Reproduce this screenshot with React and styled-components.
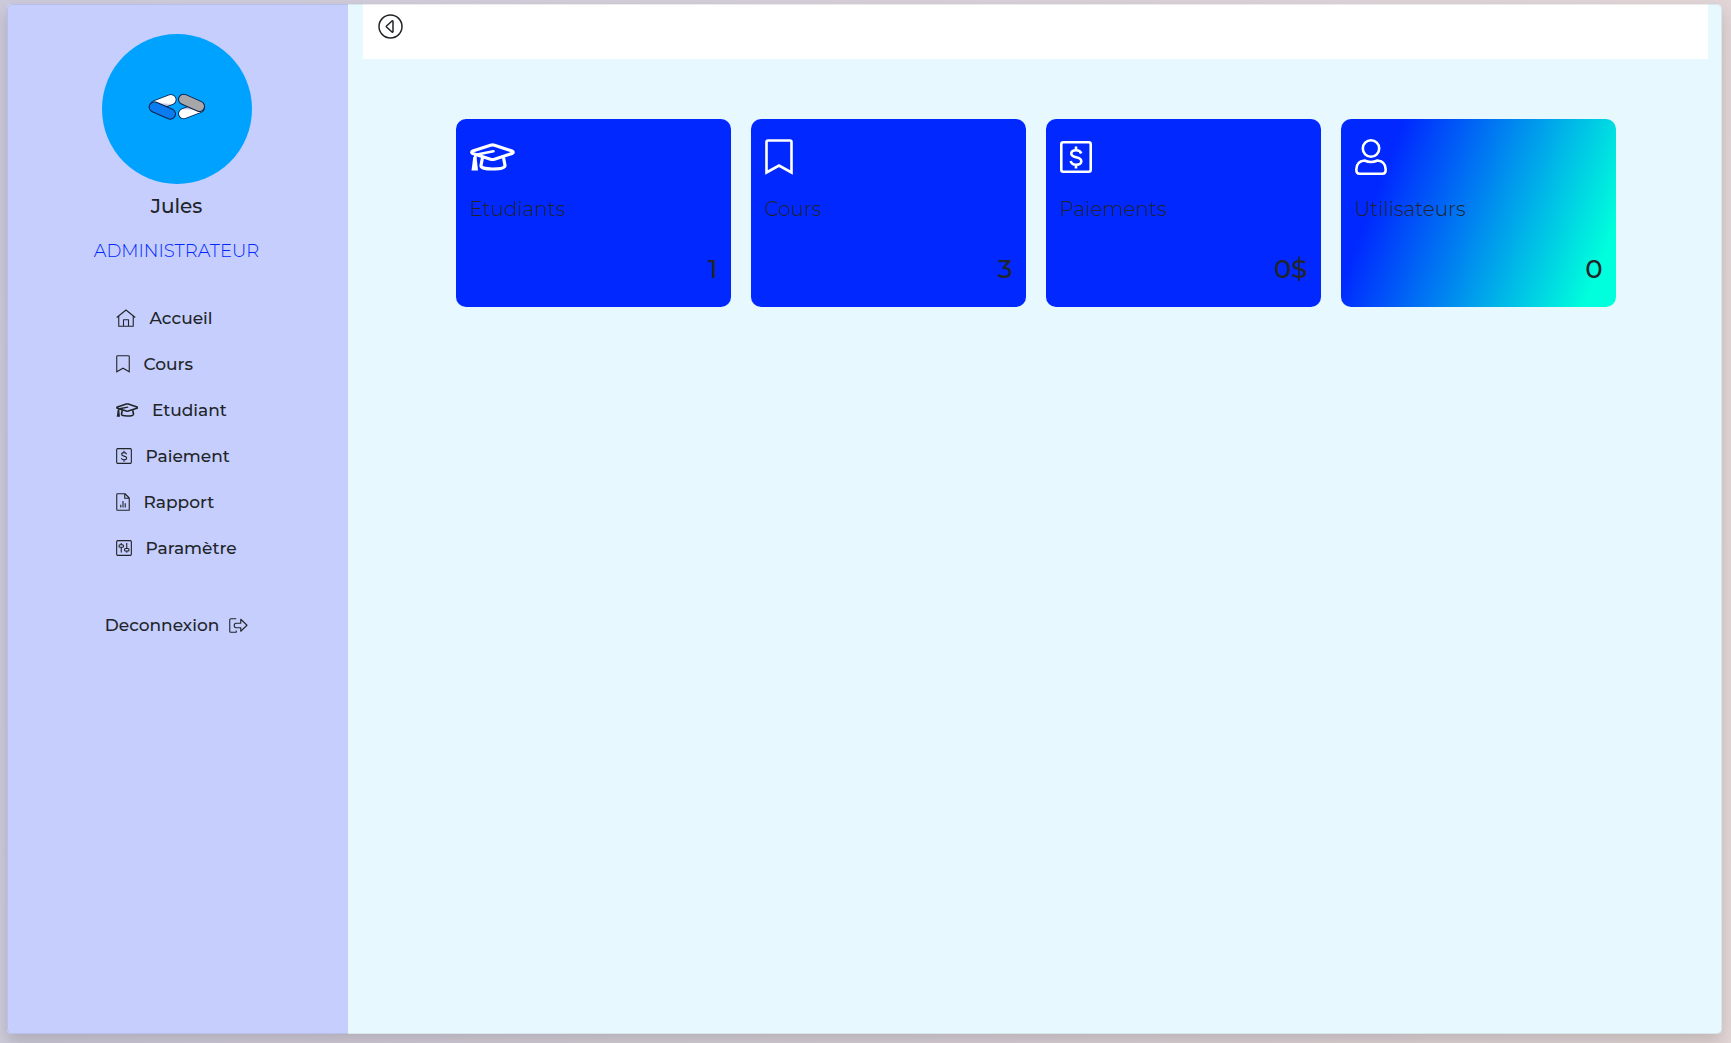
import React from "react";
import styled, { createGlobalStyle } from "styled-components";

const GlobalStyle = createGlobalStyle`
  *, *::before, *::after { box-sizing: border-box; }
  body {
    margin: 0;
    color: #212529;
    font-family: Montserrat, Inter, "Noto Sans", sans-serif;
  }
`;

const Page = styled.div`
  display: flex;
  min-height: 100vh;
  padding: 4px 9px 9px 7px;
  background: linear-gradient(100deg, #cbc9da 0%, #e3d6d6 100%);
`;

const Shell = styled.div`
  position: relative;
  display: flex;
  flex: 1;
  overflow: hidden;
  border-radius: 5px;
  background: #e7f9fe;
  box-shadow: 0 8px 16px rgba(0, 0, 0, 0.15);

  &::after {
    content: "";
    position: absolute;
    inset: 0;
    border: 1px solid rgba(0, 0, 0, 0.07);
    border-radius: inherit;
    pointer-events: none;
  }
`;

const Sidebar = styled.aside`
  display: flex;
  flex: 0 0 341px;
  flex-direction: column;
  align-items: center;
  padding: 30px 2px 0 0;
  background: #c6cefd;
`;

const Avatar = styled.div`
  display: flex;
  align-items: center;
  justify-content: center;
  width: 150px;
  height: 150px;
  padding-bottom: 4px;
  border-radius: 50%;
  background: #00a2ff;
`;

const UserName = styled.h1`
  margin: 10px 0 0;
  font-size: 20px;
  font-weight: 500;
  line-height: 24px;
`;

const Role = styled.p`
  margin: 21px 0 0;
  color: #0028ff;
  font-size: 18px;
  font-weight: 300;
  line-height: 24px;
`;

const Nav = styled.nav`
  display: flex;
  flex-direction: column;
  width: 122px;
  margin-top: 32px;
`;

const NavLink = styled.a`
  display: flex;
  align-items: center;
  gap: 14px;
  height: 46px;
  color: inherit;
  font-size: 17px;
  font-weight: 500;
  line-height: 24px;
  text-decoration: none;
  white-space: nowrap;
`;

const Logout = styled.button`
  display: flex;
  align-items: center;
  gap: 10px;
  margin-top: 42px;
  padding: 0;
  border: 0;
  background: none;
  color: inherit;
  font-family: inherit;
  font-size: 17px;
  font-weight: 500;
  line-height: 24px;
  cursor: pointer;
`;

const Main = styled.main`
  flex: 1;
  padding: 0 14px 0 15px;
`;

const TopBar = styled.header`
  height: 55px;
  padding: 10px 15px;
  background: #fff;
`;

const BackButton = styled.button`
  display: flex;
  padding: 0;
  border: 0;
  background: none;
  color: inherit;
  cursor: pointer;
`;

const Cards = styled.section`
  display: flex;
  flex-wrap: wrap;
  justify-content: center;
  gap: 20px;
  margin-top: 60px;
`;

const Card = styled.article`
  display: flex;
  flex-direction: column;
  width: 275px;
  padding: 18px 13px 22px 14px;
  border-radius: 10px;
  background: ${(p) =>
    p.$highlight
      ? "linear-gradient(111deg, #0028ff 18%, #00ffdc 91%)"
      : "#0028ff"};
`;

const CardIcon = styled.div`
  display: flex;
  align-items: center;
  height: 40px;
  color: #fff;
`;

const CardTitle = styled.h2`
  margin: 20px 0 0;
  font-size: 20px;
  font-weight: 300;
  line-height: 24px;
`;

const CardValue = styled.p`
  margin: 32px 0 0;
  font-size: 26px;
  font-weight: 500;
  line-height: 32px;
  text-align: right;
`;

const Glyph = styled.svg`
  display: block;
  flex: none;
  fill: none;
  stroke: currentColor;
  stroke-width: ${(p) => (p.$thin ? 2.2 : 2.6)};
  stroke-linejoin: round;
`;

/* Every glyph is drawn at card size; the menu shows it at half size. */
function Icon({ w, h, small, children }) {
  const k = small ? 0.5 : 1;
  return (
    <Glyph
      $thin={small}
      width={w * k}
      height={h * k}
      viewBox={`0 0 ${w} ${h}`}
      aria-hidden="true"
    >
      {children}
    </Glyph>
  );
}

const HomeIcon = (p) => (
  <Icon w={40} h={36} {...p}>
    <path d="M1.5 17 20 2l18.5 15M5.5 14v20.5h29V14M15 34.5V21.5h10v13" />
  </Icon>
);

const BookmarkIcon = (p) => (
  <Icon w={28} h={36} {...p}>
    <path
      strokeLinejoin="miter"
      d="M1.500 33.500V3Q1.500 1.500 3 1.500H25Q26.500 1.500 26.500 3V33.500L14 26.500Z"
    />
  </Icon>
);

const CapIcon = (p) => (
  <Icon w={45} h={28} {...p}>
    <g strokeWidth="3.2">
      <path d="M2.800 8 20.500 2.200Q22.500 1.600 24.500 2.200L42 8Q44.500 9.300 42 10.500L24.500 16.200Q22.500 16.800 20.500 16.200L2.800 10.500Q.500 9.300 2.800 8Z" />
      <path d="M12.500 14.500 11 22.500Q10.800 26 22.500 26Q35 26 35 22.500L33.500 14.500" />
      <path strokeWidth="2.600" strokeLinecap="round" d="M23.500 8.300 7 11.500Q5 12.200 5 15" />
    </g>
    <path stroke="none" fill="currentColor" d="M3.300 14H6.500L8 27.500H1.500Z" />
  </Icon>
);

const DollarIcon = (p) => (
  <Icon w={32} h={32} {...p}>
    <rect x="1.300" y="1.300" width="29.400" height="29.400" rx="2" />
    <path d="M16 5.500V10M16 23V27.500M21.200 12.500Q20.200 9.300 16 9.300Q11.300 9.300 11.300 12.600Q11.300 15.300 16 16.200Q21.300 17.200 21.300 20.200Q21.300 23.700 16 23.700Q11.500 23.700 10.700 20" />
  </Icon>
);

const ReportIcon = (p) => (
  <Icon w={28} h={36} {...p}>
    <path d="M3 1.500H18L26.500 10V34.500H3Q1.500 34.500 1.500 33V3Q1.500 1.500 3 1.500ZM17.500 1.500V10.500H26.500M9.500 29V23.500M14 29V16M18.500 29V20.500" />
  </Icon>
);

const SlidersIcon = (p) => (
  <Icon w={32} h={32} {...p}>
    <rect x="1.300" y="1.300" width="29.400" height="29.400" rx="2" />
    <path d="M10.500 6V9.500M10.500 14.500V25M21.500 6V17M21.500 22V25.500" />
    <rect x="6" y="9.500" width="9" height="5" rx="2" />
    <rect x="17" y="17" width="9" height="5" rx="2" />
  </Icon>
);

const UserIcon = (p) => (
  <Icon w={32} h={36} {...p}>
    <circle cx="16" cy="9.500" r="8.200" />
    <path d="M9.500 21.500Q16 24.500 22.500 21.500Q30.700 22.500 30.700 30.500Q30.700 34.700 27.500 34.700H4.500Q1.300 34.700 1.300 30.500Q1.300 22.500 9.500 21.500Z" />
  </Icon>
);

const LogoutIcon = (p) => (
  <Icon w={38} h={30} {...p}>
    <path d="M14.500 1.500H3.500Q1.500 1.500 1.500 3.500V26.500Q1.500 28.500 3.500 28.500H14.500V25" />
    <path d="M14 10.500H23.500V2.500L36 14.500 23.500 26.500V19.500H14Q10.500 19.500 10.500 15Q10.500 10.500 14 10.500Z" />
  </Icon>
);

const BackIcon = () => (
  <Glyph width="25" height="25" viewBox="0 0 25 25" aria-hidden="true">
    <g strokeWidth="1.500">
      <circle cx="12.500" cy="12.500" r="11.500" />
      <path d="M15 7.500V17.500Q15 18.600 14 18L8.500 13Q8 12.500 8.500 12L14 7Q15 6.400 15 7.500Z" />
    </g>
  </Glyph>
);

const Logo = () => (
  <svg width="58" height="28" viewBox="24 26 174 84" role="img" aria-label="Logo">
    <defs>
      <linearGradient id="shadeLeft" x1="0.800" y1="0" x2="0.500" y2="1">
        <stop offset="0.500" stopColor="#fff" />
        <stop offset="1" stopColor="#8f9fd0" />
      </linearGradient>
      <linearGradient id="shadeRight" x1="0.500" y1="1" x2="0.700" y2="0">
        <stop offset="0.500" stopColor="#fff" />
        <stop offset="1" stopColor="#8f9fd0" />
      </linearGradient>
    </defs>
    <g strokeLinecap="round" fill="none">
      <path d="M93 46 46 64" stroke="#0b2350" strokeWidth="33" />
      <path d="M93 46 46 64" stroke="url(#shadeLeft)" strokeWidth="28" />
      <path d="M43 68 91 89" stroke="#0b2350" strokeWidth="34" />
      <path d="M43 68 91 89" stroke="#0b7bf0" strokeWidth="28" />
      <path d="M131 88 178 70" stroke="#0b2350" strokeWidth="33" />
      <path d="M131 88 178 70" stroke="url(#shadeRight)" strokeWidth="28" />
      <path d="M131 45 178 66" stroke="#0b2350" strokeWidth="34" />
      <path d="M131 45 178 66" stroke="#a7a7a9" strokeWidth="28" />
    </g>
  </svg>
);

const menu = [
  { label: "Accueil", Glyph: HomeIcon },
  { label: "Cours", Glyph: BookmarkIcon },
  { label: "Etudiant", Glyph: CapIcon },
  { label: "Paiement", Glyph: DollarIcon },
  { label: "Rapport", Glyph: ReportIcon },
  { label: "Paramètre", Glyph: SlidersIcon },
];

const stats = [
  { title: "Etudiants", value: "1", Glyph: CapIcon },
  { title: "Cours", value: "3", Glyph: BookmarkIcon },
  { title: "Paiements", value: "0$", Glyph: DollarIcon },
  { title: "Utilisateurs", value: "0", Glyph: UserIcon, highlight: true },
];

export default function App() {
  return (
    <>
      <GlobalStyle />
      <Page>
        <Shell>
          <Sidebar>
            <Avatar>
              <Logo />
            </Avatar>
            <UserName>Jules</UserName>
            <Role>ADMINISTRATEUR</Role>
            <Nav>
              {menu.map(({ label, Glyph: MenuGlyph }) => (
                <NavLink href="#" key={label}>
                  <MenuGlyph small />
                  {label}
                </NavLink>
              ))}
            </Nav>
            <Logout type="button">
              Deconnexion
              <LogoutIcon small />
            </Logout>
          </Sidebar>
          <Main>
            <TopBar>
              <BackButton type="button" aria-label="Replier le menu">
                <BackIcon />
              </BackButton>
            </TopBar>
            <Cards>
              {stats.map(({ title, value, highlight, Glyph: StatGlyph }) => (
                <Card key={title} $highlight={highlight}>
                  <CardIcon>
                    <StatGlyph />
                  </CardIcon>
                  <CardTitle>{title}</CardTitle>
                  <CardValue>{value}</CardValue>
                </Card>
              ))}
            </Cards>
          </Main>
        </Shell>
      </Page>
    </>
  );
}
